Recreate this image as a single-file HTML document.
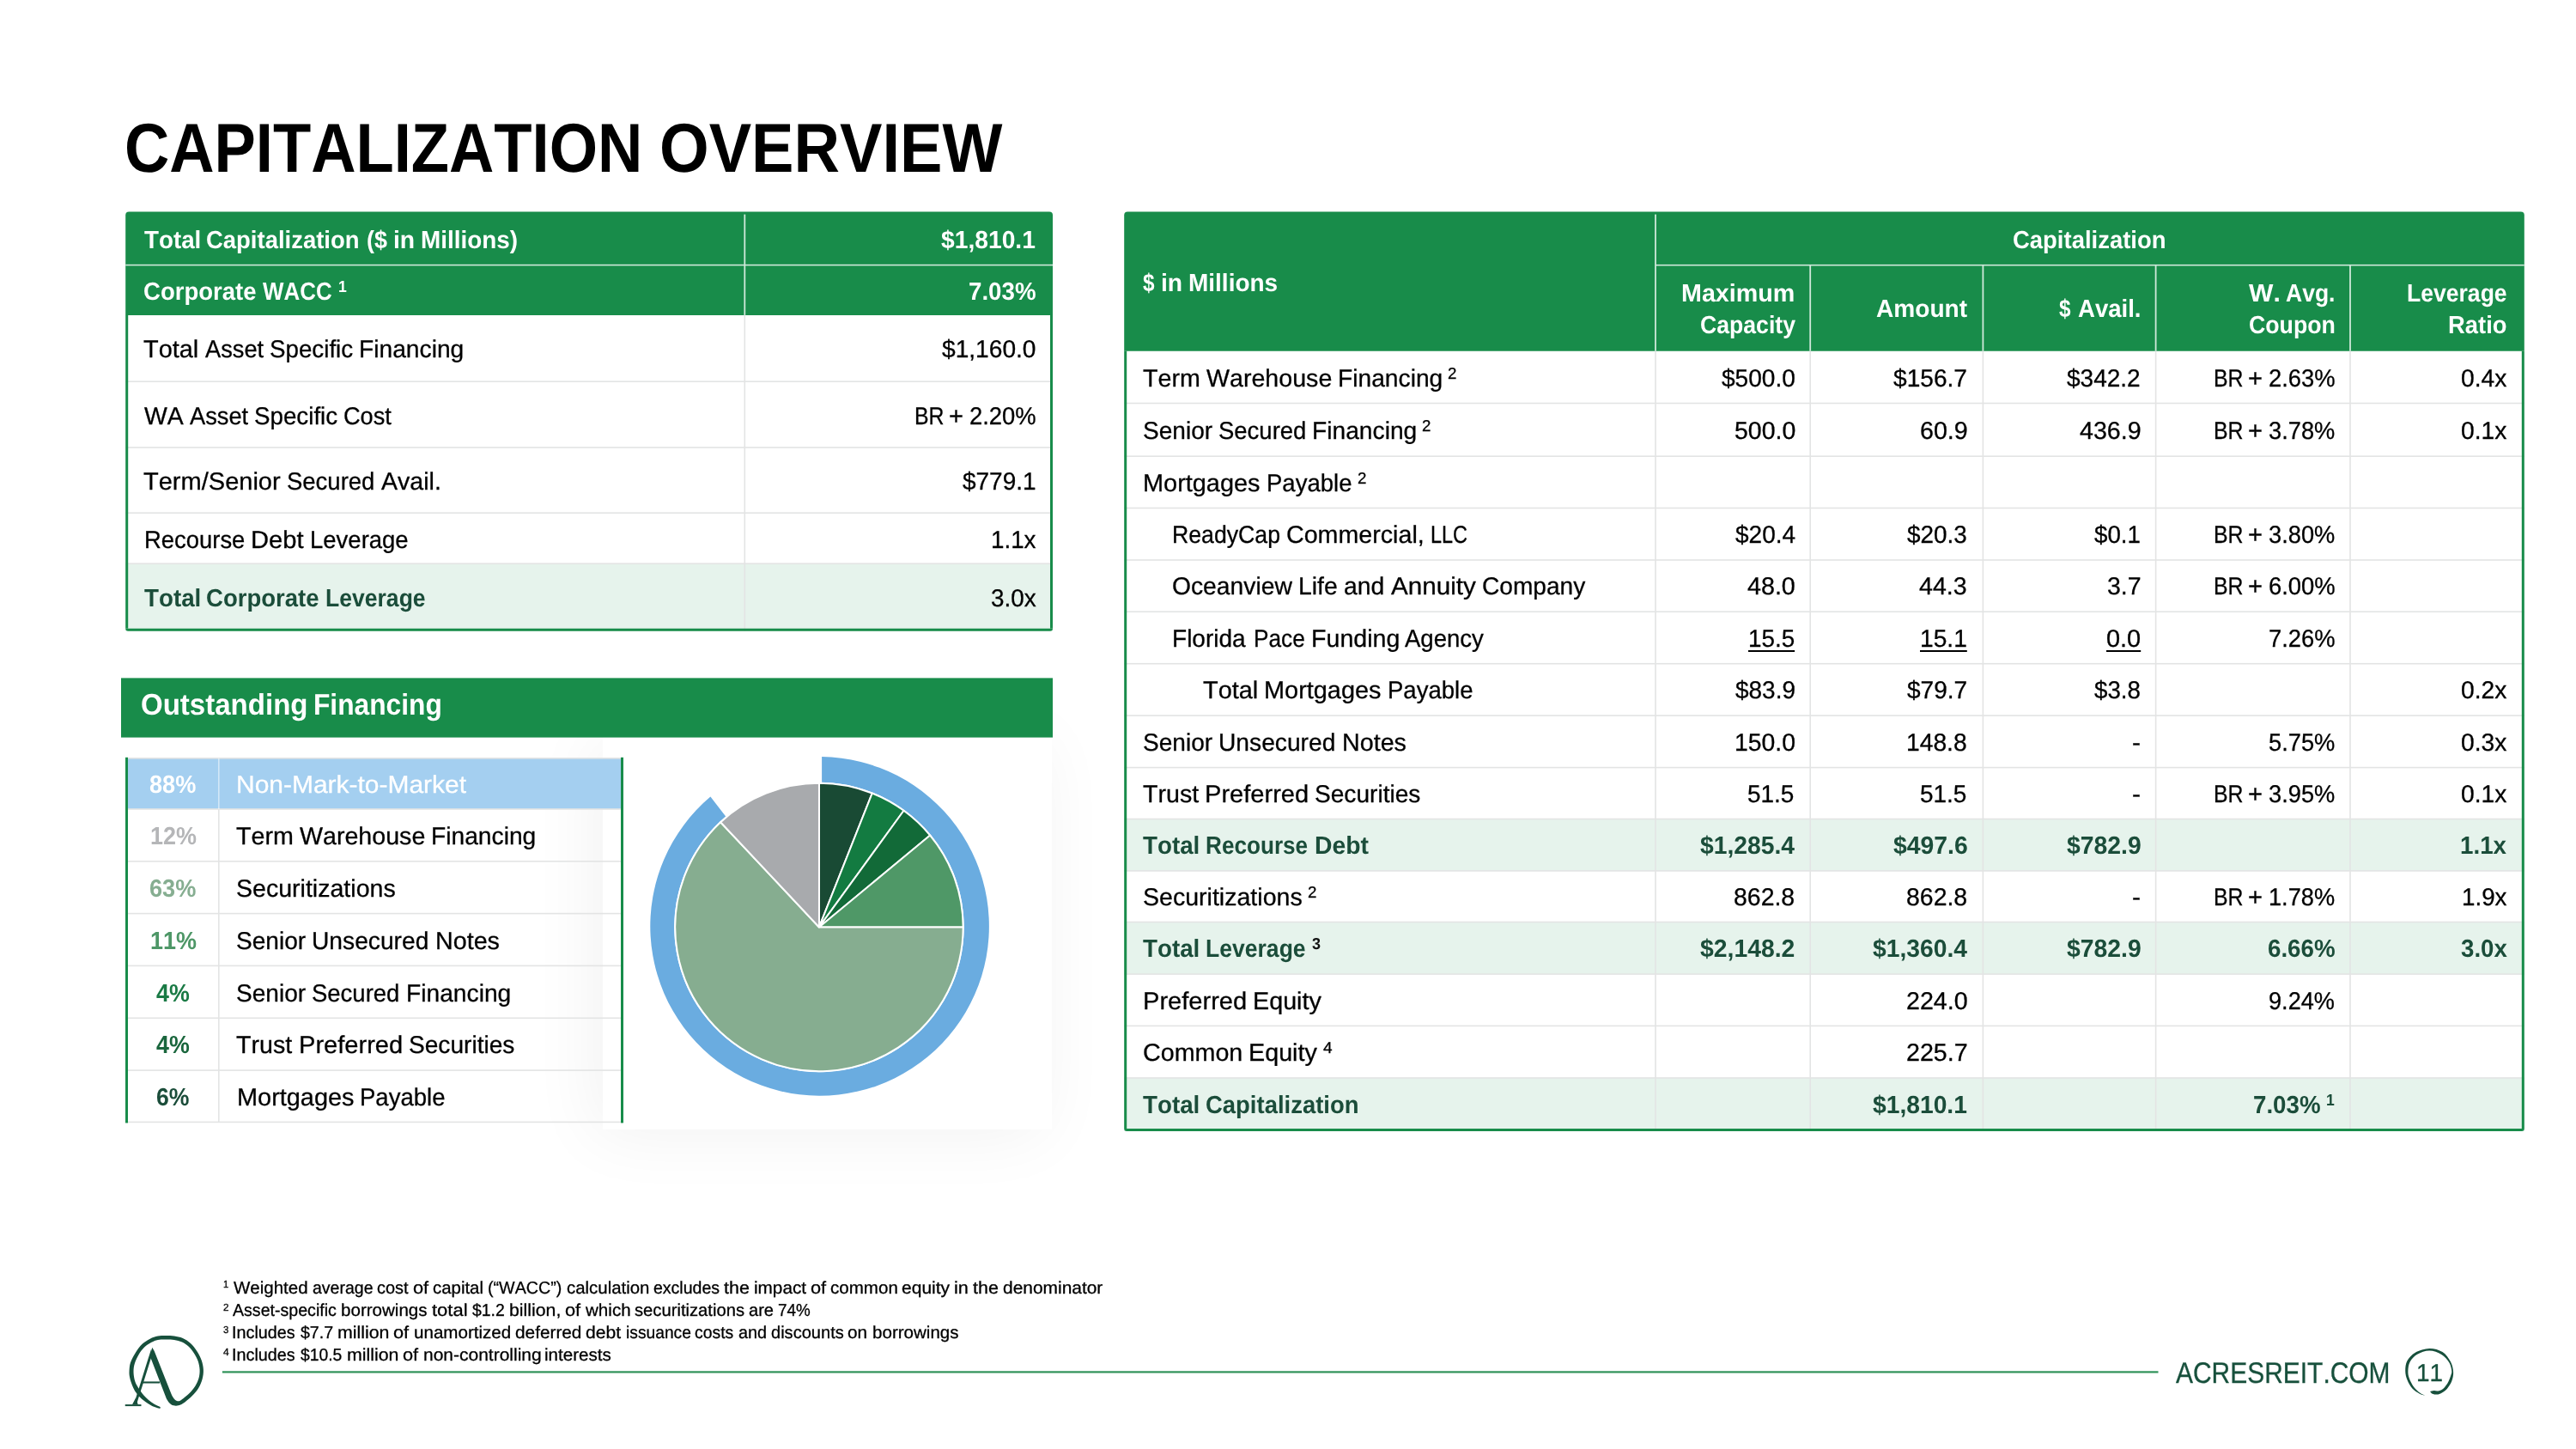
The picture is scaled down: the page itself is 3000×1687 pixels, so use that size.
<!DOCTYPE html>
<html lang="en"><head><meta charset="utf-8"><title>Capitalization Overview</title>
<style>
html,body{margin:0;padding:0;background:#fff;}
#slide{position:relative;width:3000px;height:1687px;overflow:hidden;background:#fff;
 font-family:"Liberation Sans",sans-serif;font-kerning:none;text-rendering:geometricPrecision;}
#txt{position:absolute;left:0;top:0;width:3000px;height:1687px;will-change:transform;}
.r{position:absolute;}
.l{position:absolute;left:0;top:0;width:0;height:0;}
.l{-webkit-text-stroke:0.3px currentColor;}
.b{font-weight:700;-webkit-text-stroke:0;}
.t{position:absolute;white-space:nowrap;line-height:1;transform-origin:0 0;}
svg{position:absolute;left:0;top:0;overflow:visible;}
</style></head>
<body>
<div id="slide">
<div class="r" style="left:701.8px;top:858.0px;width:522.8px;height:456.5px;background:#fff;box-shadow:-10px 6px 75px rgba(0,0,0,0.055);"></div>
<svg width="3000" height="1687" viewBox="0 0 3000 1687">
<path d="M150.20,246.60 H1222.00 A4,4 0 0 1 1226.00,250.60 V366.90 A0,0 0 0 1 1226.00,366.90 H146.20 A0,0 0 0 1 146.20,366.90 V250.60 A4,4 0 0 1 150.20,246.60 Z" fill="#188C4A"/>
<rect x="146.20" y="656.20" width="1079.80" height="78.50" fill="#E6F3EC"/>
<rect x="146.20" y="443.40" width="1079.80" height="1.60" fill="#E3E4E4"/>
<rect x="146.20" y="520.20" width="1079.80" height="1.60" fill="#E3E4E4"/>
<rect x="146.20" y="596.40" width="1079.80" height="1.60" fill="#E3E4E4"/>
<rect x="146.20" y="655.40" width="1079.80" height="1.60" fill="#E3E4E4"/>
<rect x="866.50" y="366.90" width="1.60" height="367.80" fill="#E3E4E4"/>
<rect x="146.20" y="307.80" width="1079.80" height="1.60" fill="#CFE8DA"/>
<rect x="866.40" y="249.60" width="1.80" height="117.30" fill="#CFE8DA"/>
<rect x="146.20" y="366.90" width="3.00" height="364.80" fill="#188C4A"/>
<rect x="1223.00" y="366.90" width="3.00" height="364.80" fill="#188C4A"/>
<path d="M146.20,731.70 H1226.00 A0,0 0 0 1 1226.00,731.70 V731.70 A3,3 0 0 1 1223.00,734.70 H149.20 A3,3 0 0 1 146.20,731.70 V731.70 A0,0 0 0 1 146.20,731.70 Z" fill="#188C4A"/>
<rect x="141.00" y="789.40" width="1085.00" height="69.20" fill="#188C4A"/>
<rect x="146.00" y="882.80" width="579.30" height="59.20" fill="#A4CFF0"/>
<rect x="146.00" y="882.00" width="579.30" height="1.60" fill="#E3E4E4"/>
<rect x="146.00" y="941.20" width="579.30" height="1.60" fill="#E3E4E4"/>
<rect x="146.00" y="1002.00" width="579.30" height="1.60" fill="#E3E4E4"/>
<rect x="146.00" y="1062.80" width="579.30" height="1.60" fill="#E3E4E4"/>
<rect x="146.00" y="1123.60" width="579.30" height="1.60" fill="#E3E4E4"/>
<rect x="146.00" y="1184.50" width="579.30" height="1.60" fill="#E3E4E4"/>
<rect x="146.00" y="1245.30" width="579.30" height="1.60" fill="#E3E4E4"/>
<rect x="146.00" y="1305.60" width="579.30" height="1.60" fill="#E3E4E4"/>
<rect x="254.00" y="942.00" width="1.60" height="364.40" fill="#E3E4E4"/>
<rect x="254.00" y="882.80" width="1.60" height="59.20" fill="rgba(255,255,255,0.5)"/>
<rect x="146.00" y="881.80" width="3.00" height="425.60" fill="#188C4A"/>
<rect x="723.00" y="881.80" width="3.00" height="425.60" fill="#188C4A"/>
<path d="M1313.20,246.60 H2935.80 A4,4 0 0 1 2939.80,250.60 V408.70 A0,0 0 0 1 2939.80,408.70 H1309.20 A0,0 0 0 1 1309.20,408.70 V250.60 A4,4 0 0 1 1313.20,246.60 Z" fill="#188C4A"/>
<rect x="1309.20" y="953.50" width="1630.60" height="60.40" fill="#E6F3EC"/>
<rect x="1309.20" y="1073.50" width="1630.60" height="60.60" fill="#E6F3EC"/>
<rect x="1309.20" y="1255.00" width="1630.60" height="62.00" fill="#E6F3EC"/>
<rect x="1309.20" y="468.70" width="1630.60" height="1.60" fill="#E3E4E4"/>
<rect x="1309.20" y="530.40" width="1630.60" height="1.60" fill="#E3E4E4"/>
<rect x="1309.20" y="590.70" width="1630.60" height="1.60" fill="#E3E4E4"/>
<rect x="1309.20" y="651.20" width="1630.60" height="1.60" fill="#E3E4E4"/>
<rect x="1309.20" y="711.40" width="1630.60" height="1.60" fill="#E3E4E4"/>
<rect x="1309.20" y="771.90" width="1630.60" height="1.60" fill="#E3E4E4"/>
<rect x="1309.20" y="832.30" width="1630.60" height="1.60" fill="#E3E4E4"/>
<rect x="1309.20" y="892.80" width="1630.60" height="1.60" fill="#E3E4E4"/>
<rect x="1309.20" y="952.70" width="1630.60" height="1.60" fill="#E3E4E4"/>
<rect x="1309.20" y="1013.10" width="1630.60" height="1.60" fill="#E3E4E4"/>
<rect x="1309.20" y="1072.70" width="1630.60" height="1.60" fill="#E3E4E4"/>
<rect x="1309.20" y="1133.30" width="1630.60" height="1.60" fill="#E3E4E4"/>
<rect x="1309.20" y="1193.60" width="1630.60" height="1.60" fill="#E3E4E4"/>
<rect x="1309.20" y="1254.20" width="1630.60" height="1.60" fill="#E3E4E4"/>
<rect x="1927.20" y="408.70" width="1.60" height="908.30" fill="#E3E4E4"/>
<rect x="2107.40" y="408.70" width="1.60" height="908.30" fill="#E3E4E4"/>
<rect x="2308.60" y="408.70" width="1.60" height="908.30" fill="#E3E4E4"/>
<rect x="2509.80" y="408.70" width="1.60" height="908.30" fill="#E3E4E4"/>
<rect x="2736.20" y="408.70" width="1.60" height="908.30" fill="#E3E4E4"/>
<rect x="1928.00" y="307.90" width="1011.80" height="1.60" fill="#CFE8DA"/>
<rect x="1927.10" y="249.60" width="1.80" height="159.10" fill="#CFE8DA"/>
<rect x="2107.30" y="308.70" width="1.80" height="100.00" fill="#CFE8DA"/>
<rect x="2308.50" y="308.70" width="1.80" height="100.00" fill="#CFE8DA"/>
<rect x="2509.70" y="308.70" width="1.80" height="100.00" fill="#CFE8DA"/>
<rect x="2736.10" y="308.70" width="1.80" height="100.00" fill="#CFE8DA"/>
<rect x="1309.20" y="408.70" width="3.00" height="905.30" fill="#188C4A"/>
<rect x="2936.80" y="408.70" width="3.00" height="905.30" fill="#188C4A"/>
<path d="M1309.20,1314.00 H2939.80 A0,0 0 0 1 2939.80,1314.00 V1314.00 A3,3 0 0 1 2936.80,1317.00 H1312.20 A3,3 0 0 1 1309.20,1314.00 V1314.00 A0,0 0 0 1 1309.20,1314.00 Z" fill="#188C4A"/>
<path d="M957.10,881.12 A197.3,197.3 0 1 1 827.38,927.59 L845.17,950.50 A168.7,168.7 0 1 0 957.10,910.78 Z" fill="#6AACE0"/>
<path d="M953.95,1079.45 L953.95,911.75 A167.7,167.7 0 0 1 1015.68,923.53 Z" fill="#194A34" stroke="#fff" stroke-width="2" stroke-linejoin="round"/>
<path d="M953.95,1079.45 L1015.68,923.53 A167.7,167.7 0 0 1 1052.52,943.78 Z" fill="#137B41" stroke="#fff" stroke-width="2" stroke-linejoin="round"/>
<path d="M953.95,1079.45 L1052.52,943.78 A167.7,167.7 0 0 1 1083.17,972.55 Z" fill="#126A38" stroke="#fff" stroke-width="2" stroke-linejoin="round"/>
<path d="M953.95,1079.45 L1083.17,972.55 A167.7,167.7 0 0 1 1121.65,1079.45 Z" fill="#4F9867" stroke="#fff" stroke-width="2" stroke-linejoin="round"/>
<path d="M953.95,1079.45 L1121.65,1079.45 A167.7,167.7 0 1 1 839.15,957.20 Z" fill="#86AD90" stroke="#fff" stroke-width="2" stroke-linejoin="round"/>
<path d="M953.95,1079.45 L839.15,957.20 A167.7,167.7 0 0 1 953.95,911.75 Z" fill="#A8AAAD" stroke="#fff" stroke-width="2" stroke-linejoin="round"/>
<rect x="258.9" y="1596.3" width="2254.6" height="2.2" fill="#2F9259"/>
<path transform="translate(2780,1555) scale(0.05865)" fill="#17503C" d="M755,1190 C735.8,1183.3 682.5,1173.3 640.0,1150.0 C597.5,1126.7 540.0,1095.0 500.0,1050.0 C460.0,1005.0 423.0,938.3 400.0,880.0 C377.0,821.7 362.0,763.3 362.0,700.0 C362.0,636.7 367.0,560.8 400.0,500.0 C433.0,439.2 486.7,375.8 560.0,335.0 C633.3,294.2 750.0,256.7 840.0,255.0 C930.0,253.3 1029.7,280.8 1100.0,325.0 C1170.3,369.2 1226.2,453.8 1262.0,520.0 C1297.8,586.2 1311.2,658.7 1315.0,722.0 C1318.8,785.3 1305.8,844.5 1285.0,900.0 C1264.2,955.5 1227.5,1013.3 1190.0,1055.0 C1152.5,1096.7 1098.3,1131.2 1060.0,1150.0 C1021.7,1168.8 989.2,1168.8 960.0,1168.0 C930.8,1167.2 902.5,1154.7 885.0,1145.0 C867.5,1135.3 860.0,1115.8 855.0,1110.0 C867.5,1107.0 904.2,1094.0 930.0,1092.0 C955.8,1090.0 980.0,1104.2 1010.0,1098.0 C1040.0,1091.8 1078.3,1080.5 1110.0,1055.0 C1141.7,1029.5 1174.7,987.5 1200.0,945.0 C1225.3,902.5 1248.2,840.8 1262.0,800.0 C1275.8,759.2 1288.0,744.7 1283.0,700.0 C1278.0,655.3 1265.8,586.3 1232.0,532.0 C1198.2,477.7 1145.3,412.7 1080.0,374.0 C1014.7,335.3 920.0,300.3 840.0,300.0 C760.0,299.7 664.2,335.3 600.0,372.0 C535.8,408.7 485.7,465.3 455.0,520.0 C424.3,574.7 418.5,645.0 416.0,700.0 C413.5,755.0 421.0,796.7 440.0,850.0 C459.0,903.3 495.0,972.5 530.0,1020.0 C565.0,1067.5 612.5,1106.7 650.0,1135.0 C687.5,1163.3 737.5,1180.8 755.0,1190.0 Z"/>
<g transform="translate(130,1540) scale(0.08285)" fill="#17503C" stroke="#17503C" stroke-width="0"><path d="M680,1207 C660.0,1200.0 603.3,1188.2 560.0,1165.0 C516.7,1141.8 455.8,1098.0 420.0,1068.0 C384.2,1038.0 366.7,1016.3 345.0,985.0 C323.3,953.7 305.0,915.8 290.0,880.0 C275.0,844.2 262.0,803.3 255.0,770.0 C248.0,736.7 246.3,715.0 248.0,680.0 C249.7,645.0 251.3,601.7 265.0,560.0 C278.7,518.3 302.5,473.3 330.0,430.0 C357.5,386.7 395.0,334.2 430.0,300.0 C465.0,265.8 503.3,243.8 540.0,225.0 C576.7,206.2 612.5,194.5 650.0,187.0 C687.5,179.5 726.7,180.0 765.0,180.0 C803.3,180.0 840.8,180.8 880.0,187.0 C919.2,193.2 961.7,199.8 1000.0,217.0 C1038.3,234.2 1076.7,259.5 1110.0,290.0 C1143.3,320.5 1174.2,360.0 1200.0,400.0 C1225.8,440.0 1250.0,486.7 1265.0,530.0 C1280.0,573.3 1288.3,616.7 1290.0,660.0 C1291.7,703.3 1286.7,746.7 1275.0,790.0 C1263.3,833.3 1244.2,880.0 1220.0,920.0 C1195.8,960.0 1161.7,997.5 1130.0,1030.0 C1098.3,1062.5 1061.7,1092.8 1030.0,1115.0 C998.3,1137.2 966.7,1155.0 940.0,1163.0 C913.3,1171.0 891.7,1169.3 870.0,1163.0 C848.3,1156.7 826.7,1141.3 810.0,1125.0 C793.3,1108.7 776.7,1075.0 770.0,1065.0 L540,470 L570,348 L600,398 L832,985 C835.8,993.3 844.5,1018.3 855.0,1035.0 C865.5,1051.7 879.2,1074.2 895.0,1085.0 C910.8,1095.8 930.8,1103.8 950.0,1100.0 C969.2,1096.2 985.0,1081.2 1010.0,1062.0 C1035.0,1042.8 1072.5,1013.7 1100.0,985.0 C1127.5,956.3 1154.2,924.2 1175.0,890.0 C1195.8,855.8 1214.5,818.3 1225.0,780.0 C1235.5,741.7 1239.7,700.0 1238.0,660.0 C1236.3,620.0 1228.0,578.3 1215.0,540.0 C1202.0,501.7 1182.5,464.7 1160.0,430.0 C1137.5,395.3 1108.3,358.3 1080.0,332.0 C1051.7,305.7 1023.3,287.3 990.0,272.0 C956.7,256.7 917.5,246.3 880.0,240.0 C842.5,233.7 803.3,234.0 765.0,234.0 C726.7,234.0 684.2,233.2 650.0,240.0 C615.8,246.8 591.7,257.5 560.0,275.0 C528.3,292.5 490.0,315.8 460.0,345.0 C430.0,374.2 402.5,412.5 380.0,450.0 C357.5,487.5 337.0,531.7 325.0,570.0 C313.0,608.3 308.8,643.3 308.0,680.0 C307.2,716.7 312.7,757.5 320.0,790.0 C327.3,822.5 338.7,848.3 352.0,875.0 C365.3,901.7 383.3,925.8 400.0,950.0 C416.7,974.2 432.0,997.5 452.0,1020.0 C472.0,1042.5 495.3,1064.2 520.0,1085.0 C544.7,1105.8 572.3,1128.2 600.0,1145.0 C627.7,1161.8 671.7,1179.2 686.0,1186.0 Z"/><path d="M556,372 L318,1128 L352,1140 L572,440 Z"/><path d="M338,1060 L290,1150 L372,1150 Z"/><rect x="190" y="1148" width="226" height="24"/><rect x="432" y="826" width="245" height="25"/></g>
</svg>
<div id="txt">
<div class="l b" style="color:#000"><span class="t" style="left:145.33px;top:133px;font-size:80.71px;transform:scaleX(0.8971);">CAPITALIZATION</span> <span class="t" style="left:767.73px;top:133px;font-size:80.71px;transform:scaleX(0.9183);">OVERVIEW</span></div>
<div class="l b" style="color:#fff"><span class="t" style="left:167.66px;top:266px;font-size:28.91px;transform:scaleX(0.9604);">Total</span> <span class="t" style="left:240.49px;top:266px;font-size:28.91px;transform:scaleX(0.9498);">Capitalization</span> <span class="t" style="left:426.55px;top:266px;font-size:28.91px;transform:scaleX(0.9306);">($</span> <span class="t" style="left:458.02px;top:266px;font-size:28.91px;transform:scaleX(0.9798);">in</span> <span class="t" style="left:490.39px;top:266px;font-size:28.91px;transform:scaleX(0.9639);">Millions)</span></div>
<div class="l b" style="color:#fff"><span class="t" style="left:1096.10px;top:266px;font-size:28.91px;transform:scaleX(0.9767);">$1,810.1</span></div>
<div class="l b" style="color:#fff"><span class="t" style="left:167.21px;top:326px;font-size:28.91px;transform:scaleX(0.9527);">Corporate</span> <span class="t" style="left:306.00px;top:326px;font-size:28.91px;transform:scaleX(0.8965);">WACC</span></div>
<div class="l b" style="color:#fff"><span class="t" style="left:393.54px;top:325px;font-size:18.79px;transform:scaleX(0.9347);">1</span></div>
<div class="l b" style="color:#fff"><span class="t" style="left:1127.82px;top:326px;font-size:28.91px;transform:scaleX(0.9581);">7.03%</span></div>
<div class="l" style="color:#000"><span class="t" style="left:167.42px;top:393px;font-size:28.59px;transform:scaleX(1.0115);">Total</span> <span class="t" style="left:239.15px;top:393px;font-size:28.59px;transform:scaleX(0.9527);">Asset</span> <span class="t" style="left:314.27px;top:393px;font-size:28.59px;transform:scaleX(0.9707);">Specific</span> <span class="t" style="left:418.18px;top:393px;font-size:28.59px;transform:scaleX(0.9868);">Financing</span></div>
<div class="l" style="color:#000"><span class="t" style="left:1097.15px;top:393px;font-size:28.59px;transform:scaleX(0.9843);">$1,160.0</span></div>
<div class="l" style="color:#000"><span class="t" style="left:167.76px;top:471px;font-size:28.59px;transform:scaleX(0.9939);">WA</span> <span class="t" style="left:220.72px;top:471px;font-size:28.59px;transform:scaleX(0.9527);">Asset</span> <span class="t" style="left:295.83px;top:471px;font-size:28.59px;transform:scaleX(0.9707);">Specific</span> <span class="t" style="left:399.60px;top:471px;font-size:28.59px;transform:scaleX(0.9499);">Cost</span></div>
<div class="l" style="color:#000"><span class="t" style="left:1065.16px;top:471px;font-size:28.59px;transform:scaleX(0.8687);">BR</span> <span class="t" style="left:1105.31px;top:471px;font-size:28.59px;transform:scaleX(1.0172);">+</span> <span class="t" style="left:1128.68px;top:471px;font-size:28.59px;transform:scaleX(0.9583);">2.20%</span></div>
<div class="l" style="color:#000"><span class="t" style="left:167.41px;top:547px;font-size:28.59px;transform:scaleX(1.0156);">Term/Senior</span> <span class="t" style="left:333.93px;top:547px;font-size:28.59px;transform:scaleX(0.9615);">Secured</span> <span class="t" style="left:443.87px;top:547px;font-size:28.59px;transform:scaleX(0.9993);">Avail.</span></div>
<div class="l" style="color:#000"><span class="t" style="left:1120.79px;top:547px;font-size:28.59px;transform:scaleX(0.9786);">$779.1</span></div>
<div class="l" style="color:#000"><span class="t" style="left:167.69px;top:615px;font-size:28.59px;transform:scaleX(0.9594);">Recourse</span> <span class="t" style="left:291.79px;top:615px;font-size:28.59px;transform:scaleX(1.0200);">Debt</span> <span class="t" style="left:360.63px;top:615px;font-size:28.59px;transform:scaleX(0.9622);">Leverage</span></div>
<div class="l" style="color:#000"><span class="t" style="left:1153.89px;top:615px;font-size:28.59px;transform:scaleX(0.9708);">1.1x</span></div>
<div class="l b" style="color:#1B4D3A"><span class="t" style="left:167.66px;top:683px;font-size:28.91px;transform:scaleX(0.9604);">Total</span> <span class="t" style="left:240.48px;top:683px;font-size:28.91px;transform:scaleX(0.9527);">Corporate</span> <span class="t" style="left:379.03px;top:683px;font-size:28.91px;transform:scaleX(0.9187);">Leverage</span></div>
<div class="l" style="color:#000"><span class="t" style="left:1153.69px;top:683px;font-size:28.59px;transform:scaleX(0.9745);">3.0x</span></div>
<div class="l b" style="color:#fff"><span class="t" style="left:163.94px;top:804px;font-size:34.69px;transform:scaleX(0.9527);">Outstanding</span> <span class="t" style="left:365.09px;top:804px;font-size:34.69px;transform:scaleX(0.9147);">Financing</span></div>
<div class="l b" style="color:#fff"><span class="t" style="left:174.44px;top:900px;font-size:28.91px;transform:scaleX(0.9389);">88%</span></div>
<div class="l" style="color:#fff"><span class="t" style="left:275.20px;top:900px;font-size:28.59px;transform:scaleX(1.0486);">Non-Mark-to-Market</span></div>
<div class="l b" style="color:#B5B6B8"><span class="t" style="left:174.76px;top:960px;font-size:28.91px;transform:scaleX(0.9333);">12%</span></div>
<div class="l" style="color:#000"><span class="t" style="left:275.12px;top:960px;font-size:28.59px;transform:scaleX(1.0015);">Term</span> <span class="t" style="left:349.16px;top:960px;font-size:28.59px;transform:scaleX(1.0013);">Warehouse</span> <span class="t" style="left:502.26px;top:960px;font-size:28.59px;transform:scaleX(0.9868);">Financing</span></div>
<div class="l b" style="color:#86AE91"><span class="t" style="left:174.40px;top:1021px;font-size:28.91px;transform:scaleX(0.9396);">63%</span></div>
<div class="l" style="color:#000"><span class="t" style="left:274.94px;top:1021px;font-size:28.59px;transform:scaleX(0.9991);">Securitizations</span></div>
<div class="l b" style="color:#4E9767"><span class="t" style="left:174.76px;top:1082px;font-size:28.91px;transform:scaleX(0.9333);">11%</span></div>
<div class="l" style="color:#000"><span class="t" style="left:274.96px;top:1082px;font-size:28.59px;transform:scaleX(0.9821);">Senior</span> <span class="t" style="left:363.30px;top:1082px;font-size:28.59px;transform:scaleX(0.9865);">Unsecured</span> <span class="t" style="left:507.04px;top:1082px;font-size:28.59px;transform:scaleX(1.0038);">Notes</span></div>
<div class="l b" style="color:#1A7A45"><span class="t" style="left:182.11px;top:1143px;font-size:28.91px;transform:scaleX(0.9268);">4%</span></div>
<div class="l" style="color:#000"><span class="t" style="left:274.96px;top:1143px;font-size:28.59px;transform:scaleX(0.9821);">Senior</span> <span class="t" style="left:362.93px;top:1143px;font-size:28.59px;transform:scaleX(0.9615);">Secured</span> <span class="t" style="left:472.59px;top:1143px;font-size:28.59px;transform:scaleX(0.9868);">Financing</span></div>
<div class="l b" style="color:#1A663D"><span class="t" style="left:182.11px;top:1203px;font-size:28.91px;transform:scaleX(0.9268);">4%</span></div>
<div class="l" style="color:#000"><span class="t" style="left:275.12px;top:1203px;font-size:28.59px;transform:scaleX(1.0007);">Trust</span> <span class="t" style="left:347.55px;top:1203px;font-size:28.59px;transform:scaleX(1.0174);">Preferred</span> <span class="t" style="left:475.75px;top:1203px;font-size:28.59px;transform:scaleX(0.9832);">Securities</span></div>
<div class="l b" style="color:#1B4D3A"><span class="t" style="left:182.34px;top:1264px;font-size:28.91px;transform:scaleX(0.9213);">6%</span></div>
<div class="l" style="color:#000"><span class="t" style="left:275.58px;top:1264px;font-size:28.59px;transform:scaleX(1.0108);">Mortgages</span> <span class="t" style="left:419.17px;top:1264px;font-size:28.59px;transform:scaleX(0.9628);">Payable</span></div>
<div class="l b" style="color:#fff"><span class="t" style="left:1330.98px;top:316px;font-size:28.91px;transform:scaleX(0.8414);">$</span> <span class="t" style="left:1352.09px;top:316px;font-size:28.91px;transform:scaleX(0.9798);">in</span> <span class="t" style="left:1384.45px;top:316px;font-size:28.91px;transform:scaleX(0.9679);">Millions</span></div>
<div class="l b" style="color:#fff"><span class="t" style="left:2344.44px;top:266px;font-size:28.91px;transform:scaleX(0.9498);">Capitalization</span></div>
<div class="l b" style="color:#fff"><span class="t" style="left:1958.32px;top:328px;font-size:28.91px;transform:scaleX(0.9919);">Maximum</span></div>
<div class="l b" style="color:#fff"><span class="t" style="left:1979.50px;top:365px;font-size:28.91px;transform:scaleX(0.9210);">Capacity</span></div>
<div class="l b" style="color:#fff"><span class="t" style="left:2184.83px;top:346px;font-size:28.91px;transform:scaleX(0.9713);">Amount</span></div>
<div class="l b" style="color:#fff"><span class="t" style="left:2398.44px;top:346px;font-size:28.91px;transform:scaleX(0.8414);">$</span> <span class="t" style="left:2419.53px;top:346px;font-size:28.91px;transform:scaleX(0.9532);">Avail.</span></div>
<div class="l b" style="color:#fff"><span class="t" style="left:2618.99px;top:328px;font-size:28.91px;transform:scaleX(1.0415);">W.</span> <span class="t" style="left:2662.02px;top:328px;font-size:28.91px;transform:scaleX(0.9172);">Avg.</span></div>
<div class="l b" style="color:#fff"><span class="t" style="left:2618.60px;top:365px;font-size:28.91px;transform:scaleX(0.9245);">Coupon</span></div>
<div class="l b" style="color:#fff"><span class="t" style="left:2802.82px;top:328px;font-size:28.91px;transform:scaleX(0.9187);">Leverage</span></div>
<div class="l b" style="color:#fff"><span class="t" style="left:2851.14px;top:365px;font-size:28.91px;transform:scaleX(0.9476);">Ratio</span></div>
<div class="l" style="color:#000"><span class="t" style="left:1330.82px;top:427px;font-size:28.59px;transform:scaleX(1.0015);">Term</span> <span class="t" style="left:1404.86px;top:427px;font-size:28.59px;transform:scaleX(1.0013);">Warehouse</span> <span class="t" style="left:1557.96px;top:427px;font-size:28.59px;transform:scaleX(0.9868);">Financing</span></div>
<div class="l" style="color:#000"><span class="t" style="left:1686.05px;top:426px;font-size:18.59px;transform:scaleX(1.0060);">2</span></div>
<div class="l" style="color:#000"><span class="t" style="left:2004.89px;top:427px;font-size:28.59px;transform:scaleX(0.9824);">$500.0</span></div>
<div class="l" style="color:#000"><span class="t" style="left:2205.39px;top:427px;font-size:28.59px;transform:scaleX(0.9837);">$156.7</span></div>
<div class="l" style="color:#000"><span class="t" style="left:2407.39px;top:427px;font-size:28.59px;transform:scaleX(0.9800);">$342.2</span></div>
<div class="l" style="color:#000"><span class="t" style="left:2578.26px;top:427px;font-size:28.59px;transform:scaleX(0.8687);">BR</span> <span class="t" style="left:2618.41px;top:427px;font-size:28.59px;transform:scaleX(1.0172);">+</span> <span class="t" style="left:2641.78px;top:427px;font-size:28.59px;transform:scaleX(0.9583);">2.63%</span></div>
<div class="l" style="color:#000"><span class="t" style="left:2866.11px;top:427px;font-size:28.59px;transform:scaleX(0.9872);">0.4x</span></div>
<div class="l" style="color:#000"><span class="t" style="left:1330.66px;top:488px;font-size:28.59px;transform:scaleX(0.9821);">Senior</span> <span class="t" style="left:1418.63px;top:488px;font-size:28.59px;transform:scaleX(0.9615);">Secured</span> <span class="t" style="left:1528.29px;top:488px;font-size:28.59px;transform:scaleX(0.9868);">Financing</span></div>
<div class="l" style="color:#000"><span class="t" style="left:1656.39px;top:487px;font-size:18.59px;transform:scaleX(1.0060);">2</span></div>
<div class="l" style="color:#000"><span class="t" style="left:2019.54px;top:488px;font-size:28.59px;transform:scaleX(0.9961);">500.0</span></div>
<div class="l" style="color:#000"><span class="t" style="left:2235.54px;top:488px;font-size:28.59px;transform:scaleX(1.0018);">60.9</span></div>
<div class="l" style="color:#000"><span class="t" style="left:2421.63px;top:488px;font-size:28.59px;transform:scaleX(1.0015);">436.9</span></div>
<div class="l" style="color:#000"><span class="t" style="left:2578.26px;top:488px;font-size:28.59px;transform:scaleX(0.8687);">BR</span> <span class="t" style="left:2618.41px;top:488px;font-size:28.59px;transform:scaleX(1.0172);">+</span> <span class="t" style="left:2642.17px;top:488px;font-size:28.59px;transform:scaleX(0.9535);">3.78%</span></div>
<div class="l" style="color:#000"><span class="t" style="left:2866.11px;top:488px;font-size:28.59px;transform:scaleX(0.9872);">0.1x</span></div>
<div class="l" style="color:#000"><span class="t" style="left:1331.28px;top:549px;font-size:28.59px;transform:scaleX(1.0108);">Mortgages</span> <span class="t" style="left:1474.87px;top:549px;font-size:28.59px;transform:scaleX(0.9628);">Payable</span></div>
<div class="l" style="color:#000"><span class="t" style="left:1581.29px;top:548px;font-size:18.59px;transform:scaleX(1.0060);">2</span></div>
<div class="l" style="color:#000"><span class="t" style="left:1365.45px;top:609px;font-size:28.59px;transform:scaleX(0.9330);">ReadyCap</span> <span class="t" style="left:1498.13px;top:609px;font-size:28.59px;transform:scaleX(1.0021);">Commercial,</span> <span class="t" style="left:1665.65px;top:609px;font-size:28.59px;transform:scaleX(0.8206);">LLC</span></div>
<div class="l" style="color:#000"><span class="t" style="left:2020.73px;top:609px;font-size:28.59px;transform:scaleX(0.9795);">$20.4</span></div>
<div class="l" style="color:#000"><span class="t" style="left:2221.23px;top:609px;font-size:28.59px;transform:scaleX(0.9757);">$20.3</span></div>
<div class="l" style="color:#000"><span class="t" style="left:2439.07px;top:609px;font-size:28.59px;transform:scaleX(0.9683);">$0.1</span></div>
<div class="l" style="color:#000"><span class="t" style="left:2578.26px;top:609px;font-size:28.59px;transform:scaleX(0.8687);">BR</span> <span class="t" style="left:2618.41px;top:609px;font-size:28.59px;transform:scaleX(1.0172);">+</span> <span class="t" style="left:2642.17px;top:609px;font-size:28.59px;transform:scaleX(0.9535);">3.80%</span></div>
<div class="l" style="color:#000"><span class="t" style="left:1365.16px;top:669px;font-size:28.59px;transform:scaleX(0.9890);">Oceanview</span> <span class="t" style="left:1512.26px;top:669px;font-size:28.59px;transform:scaleX(0.9925);">Life</span> <span class="t" style="left:1565.02px;top:669px;font-size:28.59px;transform:scaleX(0.9929);">and</span> <span class="t" style="left:1619.87px;top:669px;font-size:28.59px;transform:scaleX(1.0371);">Annuity</span> <span class="t" style="left:1725.59px;top:669px;font-size:28.59px;transform:scaleX(0.9832);">Company</span></div>
<div class="l" style="color:#000"><span class="t" style="left:2034.97px;top:669px;font-size:28.59px;transform:scaleX(1.0035);">48.0</span></div>
<div class="l" style="color:#000"><span class="t" style="left:2235.47px;top:669px;font-size:28.59px;transform:scaleX(0.9990);">44.3</span></div>
<div class="l" style="color:#000"><span class="t" style="left:2453.80px;top:669px;font-size:28.59px;transform:scaleX(0.9971);">3.7</span></div>
<div class="l" style="color:#000"><span class="t" style="left:2578.26px;top:669px;font-size:28.59px;transform:scaleX(0.8687);">BR</span> <span class="t" style="left:2618.41px;top:669px;font-size:28.59px;transform:scaleX(1.0172);">+</span> <span class="t" style="left:2641.77px;top:669px;font-size:28.59px;transform:scaleX(0.9585);">6.00%</span></div>
<div class="l" style="color:#000"><span class="t" style="left:1365.20px;top:730px;font-size:28.59px;transform:scaleX(0.9811);">Florida</span> <span class="t" style="left:1460.02px;top:730px;font-size:28.59px;transform:scaleX(0.9180);">Pace</span> <span class="t" style="left:1526.63px;top:730px;font-size:28.59px;transform:scaleX(1.0013);">Funding</span> <span class="t" style="left:1635.92px;top:730px;font-size:28.59px;transform:scaleX(0.9636);">Agency</span></div>
<div class="l" style="color:#000"><span class="t" style="left:2035.68px;top:730px;font-size:28.59px;transform:scaleX(0.9731);text-decoration:underline;text-decoration-thickness:2px;text-underline-offset:4px;">15.5</span></div>
<div class="l" style="color:#000"><span class="t" style="left:2236.15px;top:730px;font-size:28.59px;transform:scaleX(0.9852);text-decoration:underline;text-decoration-thickness:2px;text-underline-offset:4px;">15.1</span></div>
<div class="l" style="color:#000"><span class="t" style="left:2453.11px;top:730px;font-size:28.59px;transform:scaleX(1.0117);text-decoration:underline;text-decoration-thickness:2px;text-underline-offset:4px;">0.0</span></div>
<div class="l" style="color:#000"><span class="t" style="left:2641.85px;top:730px;font-size:28.59px;transform:scaleX(0.9575);">7.26%</span></div>
<div class="l" style="color:#000"><span class="t" style="left:1400.62px;top:790px;font-size:28.59px;transform:scaleX(1.0115);">Total</span> <span class="t" style="left:1472.46px;top:790px;font-size:28.59px;transform:scaleX(1.0108);">Mortgages</span> <span class="t" style="left:1616.05px;top:790px;font-size:28.59px;transform:scaleX(0.9628);">Payable</span></div>
<div class="l" style="color:#000"><span class="t" style="left:2020.73px;top:790px;font-size:28.59px;transform:scaleX(0.9788);">$83.9</span></div>
<div class="l" style="color:#000"><span class="t" style="left:2221.23px;top:790px;font-size:28.59px;transform:scaleX(0.9809);">$79.7</span></div>
<div class="l" style="color:#000"><span class="t" style="left:2439.07px;top:790px;font-size:28.59px;transform:scaleX(0.9684);">$3.8</span></div>
<div class="l" style="color:#000"><span class="t" style="left:2866.11px;top:790px;font-size:28.59px;transform:scaleX(0.9872);">0.2x</span></div>
<div class="l" style="color:#000"><span class="t" style="left:1330.66px;top:851px;font-size:28.59px;transform:scaleX(0.9821);">Senior</span> <span class="t" style="left:1419.00px;top:851px;font-size:28.59px;transform:scaleX(0.9865);">Unsecured</span> <span class="t" style="left:1562.74px;top:851px;font-size:28.59px;transform:scaleX(1.0038);">Notes</span></div>
<div class="l" style="color:#000"><span class="t" style="left:2019.80px;top:851px;font-size:28.59px;transform:scaleX(0.9924);">150.0</span></div>
<div class="l" style="color:#000"><span class="t" style="left:2220.31px;top:851px;font-size:28.59px;transform:scaleX(0.9878);">148.8</span></div>
<div class="l" style="color:#000"><span class="t" style="left:2483.25px;top:851px;font-size:28.59px;transform:scaleX(1.0449);">-</span></div>
<div class="l" style="color:#000"><span class="t" style="left:2642.08px;top:851px;font-size:28.59px;transform:scaleX(0.9546);">5.75%</span></div>
<div class="l" style="color:#000"><span class="t" style="left:2866.11px;top:851px;font-size:28.59px;transform:scaleX(0.9872);">0.3x</span></div>
<div class="l" style="color:#000"><span class="t" style="left:1330.82px;top:911px;font-size:28.59px;transform:scaleX(1.0007);">Trust</span> <span class="t" style="left:1403.25px;top:911px;font-size:28.59px;transform:scaleX(1.0174);">Preferred</span> <span class="t" style="left:1531.45px;top:911px;font-size:28.59px;transform:scaleX(0.9832);">Securities</span></div>
<div class="l" style="color:#000"><span class="t" style="left:2035.39px;top:911px;font-size:28.59px;transform:scaleX(0.9782);">51.5</span></div>
<div class="l" style="color:#000"><span class="t" style="left:2235.89px;top:911px;font-size:28.59px;transform:scaleX(0.9782);">51.5</span></div>
<div class="l" style="color:#000"><span class="t" style="left:2483.25px;top:911px;font-size:28.59px;transform:scaleX(1.0449);">-</span></div>
<div class="l" style="color:#000"><span class="t" style="left:2578.26px;top:911px;font-size:28.59px;transform:scaleX(0.8687);">BR</span> <span class="t" style="left:2618.41px;top:911px;font-size:28.59px;transform:scaleX(1.0172);">+</span> <span class="t" style="left:2642.17px;top:911px;font-size:28.59px;transform:scaleX(0.9535);">3.95%</span></div>
<div class="l" style="color:#000"><span class="t" style="left:2866.11px;top:911px;font-size:28.59px;transform:scaleX(0.9872);">0.1x</span></div>
<div class="l b" style="color:#1B4D3A"><span class="t" style="left:1331.06px;top:971px;font-size:28.91px;transform:scaleX(0.9604);">Total</span> <span class="t" style="left:1404.42px;top:971px;font-size:28.91px;transform:scaleX(0.9045);">Recourse</span> <span class="t" style="left:1530.59px;top:971px;font-size:28.91px;transform:scaleX(0.9814);">Debt</span></div>
<div class="l b" style="color:#1B4D3A"><span class="t" style="left:1980.20px;top:971px;font-size:28.91px;transform:scaleX(0.9773);">$1,285.4</span></div>
<div class="l b" style="color:#1B4D3A"><span class="t" style="left:2204.60px;top:971px;font-size:28.91px;transform:scaleX(0.9810);">$497.6</span></div>
<div class="l b" style="color:#1B4D3A"><span class="t" style="left:2406.60px;top:971px;font-size:28.91px;transform:scaleX(0.9815);">$782.9</span></div>
<div class="l b" style="color:#1B4D3A"><span class="t" style="left:2865.46px;top:971px;font-size:28.91px;transform:scaleX(0.9597);">1.1x</span></div>
<div class="l" style="color:#000"><span class="t" style="left:1330.64px;top:1031px;font-size:28.59px;transform:scaleX(0.9991);">Securitizations</span></div>
<div class="l" style="color:#000"><span class="t" style="left:1523.45px;top:1030px;font-size:18.59px;transform:scaleX(1.0060);">2</span></div>
<div class="l" style="color:#000"><span class="t" style="left:2019.27px;top:1031px;font-size:28.59px;transform:scaleX(0.9954);">862.8</span></div>
<div class="l" style="color:#000"><span class="t" style="left:2219.77px;top:1031px;font-size:28.59px;transform:scaleX(0.9954);">862.8</span></div>
<div class="l" style="color:#000"><span class="t" style="left:2483.25px;top:1031px;font-size:28.59px;transform:scaleX(1.0449);">-</span></div>
<div class="l" style="color:#000"><span class="t" style="left:2578.26px;top:1031px;font-size:28.59px;transform:scaleX(0.8687);">BR</span> <span class="t" style="left:2618.41px;top:1031px;font-size:28.59px;transform:scaleX(1.0172);">+</span> <span class="t" style="left:2642.39px;top:1031px;font-size:28.59px;transform:scaleX(0.9508);">1.78%</span></div>
<div class="l" style="color:#000"><span class="t" style="left:2866.99px;top:1031px;font-size:28.59px;transform:scaleX(0.9708);">1.9x</span></div>
<div class="l b" style="color:#1B4D3A"><span class="t" style="left:1331.06px;top:1091px;font-size:28.91px;transform:scaleX(0.9604);">Total</span> <span class="t" style="left:1404.24px;top:1091px;font-size:28.91px;transform:scaleX(0.9187);">Leverage</span></div>
<div class="l b" style="color:#111"><span class="t" style="left:1528.32px;top:1090px;font-size:18.79px;transform:scaleX(0.9610);">3</span></div>
<div class="l b" style="color:#1B4D3A"><span class="t" style="left:1980.20px;top:1091px;font-size:28.91px;transform:scaleX(0.9806);">$2,148.2</span></div>
<div class="l b" style="color:#1B4D3A"><span class="t" style="left:2180.70px;top:1091px;font-size:28.91px;transform:scaleX(0.9773);">$1,360.4</span></div>
<div class="l b" style="color:#1B4D3A"><span class="t" style="left:2406.60px;top:1091px;font-size:28.91px;transform:scaleX(0.9815);">$782.9</span></div>
<div class="l b" style="color:#1B4D3A"><span class="t" style="left:2640.86px;top:1091px;font-size:28.91px;transform:scaleX(0.9587);">6.66%</span></div>
<div class="l b" style="color:#1B4D3A"><span class="t" style="left:2865.64px;top:1091px;font-size:28.91px;transform:scaleX(0.9564);">3.0x</span></div>
<div class="l" style="color:#000"><span class="t" style="left:1330.96px;top:1152px;font-size:28.59px;transform:scaleX(1.0174);">Preferred</span> <span class="t" style="left:1459.45px;top:1152px;font-size:28.59px;transform:scaleX(1.0051);">Equity</span></div>
<div class="l" style="color:#000"><span class="t" style="left:2219.72px;top:1152px;font-size:28.59px;transform:scaleX(1.0006);">224.0</span></div>
<div class="l" style="color:#000"><span class="t" style="left:2642.48px;top:1152px;font-size:28.59px;transform:scaleX(0.9496);">9.24%</span></div>
<div class="l" style="color:#000"><span class="t" style="left:1330.67px;top:1212px;font-size:28.59px;transform:scaleX(1.0033);">Common</span> <span class="t" style="left:1453.99px;top:1212px;font-size:28.59px;transform:scaleX(1.0051);">Equity</span></div>
<div class="l" style="color:#000"><span class="t" style="left:1540.99px;top:1211px;font-size:18.59px;transform:scaleX(1.0260);">4</span></div>
<div class="l" style="color:#000"><span class="t" style="left:2219.72px;top:1212px;font-size:28.59px;transform:scaleX(1.0024);">225.7</span></div>
<div class="l b" style="color:#1B4D3A"><span class="t" style="left:1331.06px;top:1273px;font-size:28.91px;transform:scaleX(0.9604);">Total</span> <span class="t" style="left:1403.89px;top:1273px;font-size:28.91px;transform:scaleX(0.9498);">Capitalization</span></div>
<div class="l b" style="color:#1B4D3A"><span class="t" style="left:2180.70px;top:1273px;font-size:28.91px;transform:scaleX(0.9767);">$1,810.1</span></div>
<div class="l b" style="color:#1B4D3A"><span class="t" style="left:2623.56px;top:1273px;font-size:28.91px;transform:scaleX(0.9581);">7.03%</span></div>
<div class="l b" style="color:#1B4D3A"><span class="t" style="left:2709.46px;top:1272px;font-size:18.79px;transform:scaleX(0.9347);">1</span></div>
<div class="l" style="color:#000"><span class="t" style="left:260.45px;top:1490px;font-size:11.61px;transform:scaleX(0.9517);">1</span></div>
<div class="l" style="color:#000"><span class="t" style="left:271.76px;top:1490px;font-size:20.02px;transform:scaleX(1.0240);">Weighted</span> <span class="t" style="left:363.59px;top:1490px;font-size:20.02px;transform:scaleX(0.9750);">average</span> <span class="t" style="left:438.89px;top:1490px;font-size:20.02px;transform:scaleX(0.9952);">cost</span> <span class="t" style="left:480.50px;top:1490px;font-size:20.02px;transform:scaleX(1.0866);">of</span> <span class="t" style="left:503.64px;top:1490px;font-size:20.02px;transform:scaleX(1.0194);">capital</span> <span class="t" style="left:568.17px;top:1490px;font-size:20.02px;transform:scaleX(0.9820);">(“WACC”)</span> <span class="t" style="left:659.62px;top:1490px;font-size:20.02px;transform:scaleX(1.0200);">calculation</span> <span class="t" style="left:761.03px;top:1490px;font-size:20.02px;transform:scaleX(0.9751);">excludes</span> <span class="t" style="left:843.10px;top:1490px;font-size:20.02px;transform:scaleX(1.0718);">the</span> <span class="t" style="left:877.50px;top:1490px;font-size:20.02px;transform:scaleX(1.0349);">impact</span> <span class="t" style="left:943.58px;top:1490px;font-size:20.02px;transform:scaleX(1.0866);">of</span> <span class="t" style="left:966.71px;top:1490px;font-size:20.02px;transform:scaleX(1.0278);">common</span> <span class="t" style="left:1050.47px;top:1490px;font-size:20.02px;transform:scaleX(1.0502);">equity</span> <span class="t" style="left:1111.35px;top:1490px;font-size:20.02px;transform:scaleX(1.0819);">in</span> <span class="t" style="left:1133.12px;top:1490px;font-size:20.02px;transform:scaleX(1.0718);">the</span> <span class="t" style="left:1167.64px;top:1490px;font-size:20.02px;transform:scaleX(1.0456);">denominator</span></div>
<div class="l" style="color:#000"><span class="t" style="left:260.18px;top:1517px;font-size:11.61px;transform:scaleX(1.0061);">2</span></div>
<div class="l" style="color:#000"><span class="t" style="left:271.26px;top:1516px;font-size:20.02px;transform:scaleX(0.9787);">Asset-specific</span> <span class="t" style="left:397.20px;top:1516px;font-size:20.02px;transform:scaleX(1.0275);">borrowings</span> <span class="t" style="left:502.78px;top:1516px;font-size:20.02px;transform:scaleX(1.0983);">total</span> <span class="t" style="left:550.41px;top:1516px;font-size:20.02px;transform:scaleX(0.9701);">$1.2</span> <span class="t" style="left:593.28px;top:1516px;font-size:20.02px;transform:scaleX(1.0636);">billion,</span> <span class="t" style="left:658.01px;top:1516px;font-size:20.02px;transform:scaleX(1.0866);">of</span> <span class="t" style="left:681.53px;top:1516px;font-size:20.02px;transform:scaleX(1.0285);">which</span> <span class="t" style="left:739.30px;top:1516px;font-size:20.02px;transform:scaleX(1.0094);">securitizations</span> <span class="t" style="left:872.33px;top:1516px;font-size:20.02px;transform:scaleX(1.0039);">are</span> <span class="t" style="left:906.30px;top:1516px;font-size:20.02px;transform:scaleX(0.9408);">74%</span></div>
<div class="l" style="color:#000"><span class="t" style="left:260.36px;top:1543px;font-size:11.61px;transform:scaleX(0.9735);">3</span></div>
<div class="l" style="color:#000"><span class="t" style="left:270.47px;top:1542px;font-size:20.02px;transform:scaleX(0.9887);">Includes</span> <span class="t" style="left:350.19px;top:1542px;font-size:20.02px;transform:scaleX(0.9761);">$7.7</span> <span class="t" style="left:393.04px;top:1542px;font-size:20.02px;transform:scaleX(1.0660);">million</span> <span class="t" style="left:458.31px;top:1542px;font-size:20.02px;transform:scaleX(1.0866);">of</span> <span class="t" style="left:481.57px;top:1542px;font-size:20.02px;transform:scaleX(1.0280);">unamortized</span> <span class="t" style="left:599.90px;top:1542px;font-size:20.02px;transform:scaleX(1.0387);">deferred</span> <span class="t" style="left:682.40px;top:1542px;font-size:20.02px;transform:scaleX(1.0538);">debt</span> <span class="t" style="left:728.53px;top:1542px;font-size:20.02px;transform:scaleX(0.9606);">issuance</span> <span class="t" style="left:809.23px;top:1542px;font-size:20.02px;transform:scaleX(0.9689);">costs</span> <span class="t" style="left:859.54px;top:1542px;font-size:20.02px;transform:scaleX(0.9925);">and</span> <span class="t" style="left:897.84px;top:1542px;font-size:20.02px;transform:scaleX(1.0022);">discounts</span> <span class="t" style="left:987.49px;top:1542px;font-size:20.02px;transform:scaleX(1.0380);">on</span> <span class="t" style="left:1015.75px;top:1542px;font-size:20.02px;transform:scaleX(1.0275);">borrowings</span></div>
<div class="l" style="color:#000"><span class="t" style="left:260.14px;top:1569px;font-size:11.61px;transform:scaleX(1.0261);">4</span></div>
<div class="l" style="color:#000"><span class="t" style="left:270.47px;top:1568px;font-size:20.02px;transform:scaleX(0.9887);">Includes</span> <span class="t" style="left:350.19px;top:1568px;font-size:20.02px;transform:scaleX(0.9652);">$10.5</span> <span class="t" style="left:404.13px;top:1568px;font-size:20.02px;transform:scaleX(1.0660);">million</span> <span class="t" style="left:469.39px;top:1568px;font-size:20.02px;transform:scaleX(1.0866);">of</span> <span class="t" style="left:492.76px;top:1568px;font-size:20.02px;transform:scaleX(1.0486);">non-controlling</span> <span class="t" style="left:634.24px;top:1568px;font-size:20.02px;transform:scaleX(1.0294);">interests</span></div>
<div class="l" style="color:#17503C"><span class="t" style="left:2533.84px;top:1582px;font-size:34.31px;transform:scaleX(0.8731);">ACRESREIT.COM</span></div>
<div class="l" style="color:#17503C"><span class="t" style="left:2814.13px;top:1585px;font-size:28.59px;transform:scaleX(0.9768);">11</span></div>
</div>
</div>
</body></html>
